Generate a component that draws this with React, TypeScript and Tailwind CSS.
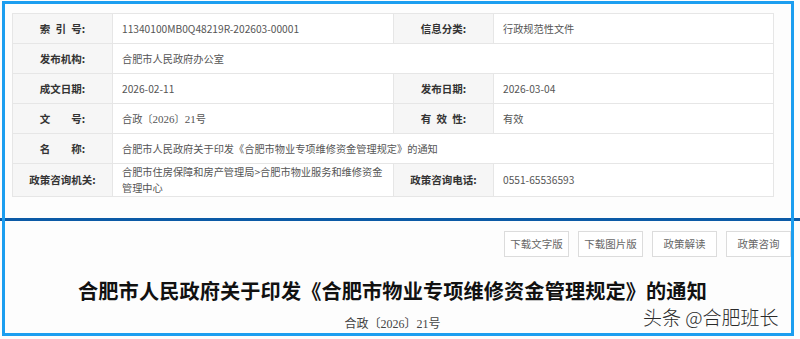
import React from 'react';

const cjk = { fontFamily: '"Noto Sans CJK SC", "Microsoft YaHei", sans-serif' };

function Label({ children }: { children: React.ReactNode }) {
  return (
    <td className="w-[100px] h-[30px] border border-[#e6e6e6] bg-[#f6f6f6] text-center text-[10.5px] font-bold text-[#333] whitespace-pre">
      {children}
    </td>
  );
}

function Value({ children, span }: { children: React.ReactNode; span?: number }) {
  return (
    <td colSpan={span} className="h-[30px] border border-[#e6e6e6] bg-white pl-[9px] pr-[8px] text-[10.2px] text-[#555] leading-[16px]">
      {children}
    </td>
  );
}

const serifNum = { fontFamily: '"Liberation Serif", serif' };

export default function App() {
  return (
    <div className="relative w-[800px] h-[339px] bg-[#fdfdfd] overflow-hidden" style={cjk}>
      {/* 信息表 */}
      <div className="h-[221px] pt-[13px] pl-[12px] border-b-[3px] border-[#0b5aa6]">
        <table className="border-collapse table-fixed w-[761px]">
          <colgroup>
            <col className="w-[100px]" />
            <col className="w-[281px]" />
            <col className="w-[100px]" />
            <col className="w-[280px]" />
          </colgroup>
          <tbody>
            <tr>
              <Label>{'索\u2002引\u2002号:'}</Label>
              <Value>11340100MB0Q48219R-202603-00001</Value>
              <Label>信息分类:</Label>
              <Value>行政规范性文件</Value>
            </tr>
            <tr>
              <Label>发布机构:</Label>
              <Value span={3}>合肥市人民政府办公室</Value>
            </tr>
            <tr>
              <Label>成文日期:</Label>
              <Value>2026-02-11</Value>
              <Label>发布日期:</Label>
              <Value>2026-03-04</Value>
            </tr>
            <tr>
              <Label>{'文\u3000\u3000号:'}</Label>
              <Value>
                合政〔<span style={serifNum} className="text-[11px]">2026</span>〕<span style={serifNum} className="text-[11px]">21</span>号
              </Value>
              <Label>{'有\u2002效\u2002性:'}</Label>
              <Value>有效</Value>
            </tr>
            <tr>
              <Label>{'名\u3000\u3000称:'}</Label>
              <Value span={3}>合肥市人民政府关于印发《合肥市物业专项维修资金管理规定》的通知</Value>
            </tr>
            <tr className="h-[32px]">
              <Label>政策咨询机关:</Label>
              <Value>合肥市住房保障和房产管理局&gt;合肥市物业服务和维修资金管理中心</Value>
              <Label>政策咨询电话:</Label>
              <Value>0551-65536593</Value>
            </tr>
          </tbody>
        </table>
      </div>

      {/* 正文头部 */}
      <div className="flex flex-col">
        <div className="flex justify-end gap-[9px] pr-[9px] pt-[10px]">
          {['下载文字版', '下载图片版', '政策解读', '政策咨询'].map((b) => (
            <div key={b} className="w-[65px] h-[26px] flex items-center justify-center border border-[#dcdcdc] bg-white text-[10.5px] text-[#666]">
              {b}
            </div>
          ))}
        </div>
        <div className="w-[761px] ml-[12px] mt-[22px] text-center text-[20.2px] font-bold text-[#111] leading-[24px] tracking-[0.1px]">
          合肥市人民政府关于印发《合肥市物业专项维修资金管理规定》的通知
        </div>
        <div className="w-[761px] ml-[12px] mt-[12px] text-center text-[12px] text-[#444] leading-[16px]">
          合政〔<span style={serifNum}>2026</span>〕<span style={serifNum}>21</span>号
        </div>
      </div>

      {/* 蓝色标注框 */}
      <div className="absolute left-[2px] top-[1px] w-[792px] h-[335px] border-[3px] border-[#1c9ef0] pointer-events-none" />

      {/* 水印 */}
      <div className="absolute left-[643px] top-[305px] text-[19px] font-light text-[#2a2a2a] leading-[24px] [text-shadow:0_0_2px_#fff,0_0_2px_#fff]">
        头条 @合肥班长
      </div>
    </div>
  );
}
